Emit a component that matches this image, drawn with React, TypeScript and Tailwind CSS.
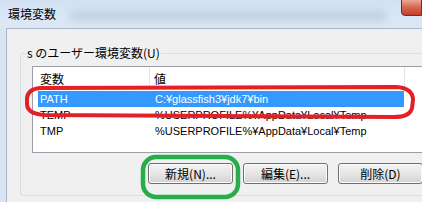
export default function App() {
  const rows = [
    { name: 'PATH', value: 'C:¥glassfish3¥jdk7¥bin', selected: true },
    { name: 'TEMP', value: '%USERPROFILE%¥AppData¥Local¥Temp', selected: false },
    { name: 'TMP', value: '%USERPROFILE%¥AppData¥Local¥Temp', selected: false },
  ];

  return (
    <div className="relative w-[422px] h-[202px] overflow-hidden bg-[#f0f0f0] text-black font-['Liberation_Sans','Noto_Sans_CJK_JP',sans-serif]">
      {/* title bar */}
      <div className="h-[28px] flex items-start bg-gradient-to-b from-[#d3e2f3] to-[#dde8f5]">
        <span className="ml-[8px] mt-[7px] text-[12px] leading-[14px] font-['Noto_Sans_CJK_JP',sans-serif]">環境変数</span>
        <div className="flex-1 h-[10px] mt-[11px] ml-[14px] mr-[14px] bg-[#aebfd2] opacity-60 blur-[4px] rounded-full" />
        <div className="shrink-0 w-[21px] h-[17px] -mt-px border border-[#4b3b3b] rounded-bl-[4px] bg-gradient-to-b from-[#e9a895] via-[#d6644d] to-[#c3402a]" />
      </div>

      <div className="flex h-[174px]">
        <div className="shrink-0 w-[6px] bg-[#d9e5f3]" />
        <div className="flex-1 min-w-0 border-l border-t border-[#a7b6c8] pl-[13px] pt-[24px]">
          {/* group box */}
          <div className="relative w-[420px] h-[143px] border border-[#d5dfe5] rounded-[3px]">
            <span className="absolute left-[5px] -top-[8px] px-[1px] bg-[#f0f0f0] text-[12px] leading-[14px] font-['Noto_Sans_CJK_JP',sans-serif]">
              s のユーザー環境変数(U)
            </span>

            {/* list view */}
            <div className="ml-[11px] mt-[12px] w-[400px] h-[87px] border border-[#9a9ea6] bg-white">
              <div className="flex h-[24px] items-center text-[12px] font-['Noto_Sans_CJK_JP',sans-serif]">
                <div className="w-[117px] h-full flex items-center pl-[7px] border-r border-[#e5e5e5]">変数</div>
                <div className="w-[255px] h-full flex items-center pl-[4px] border-r border-[#e5e5e5]">値</div>
              </div>
              {rows.map((r) => (
                <div
                  key={r.name}
                  className={`ml-[5px] w-[366px] h-[16px] flex items-center text-[11px] leading-[16px] ${
                    r.selected ? 'bg-[#3399ff] text-white' : ''
                  }`}
                >
                  <div className="w-[117px] pl-[2px]">{r.name}</div>
                  <div className="whitespace-nowrap">{r.value}</div>
                </div>
              ))}
            </div>

            {/* buttons */}
            <div className="flex gap-[10px] ml-[127px] mt-[10px]">
              {['新規(N)...', '編集(E)...', '削除(D)'].map((label) => (
                <button
                  key={label}
                  className="shrink-0 w-[85px] h-[21px] border border-[#707070] rounded-[3px] bg-gradient-to-b from-[#f3f3f3] via-[#e6e6e6] to-[#d2d2d2] shadow-[inset_0_0_0_1px_#fbfbfb] text-[12px] leading-[14px] font-['Noto_Sans_CJK_JP',sans-serif]"
                >
                  {label}
                </button>
              ))}
            </div>
          </div>
        </div>
      </div>

      {/* hand-drawn annotations */}
      <svg className="absolute inset-0 pointer-events-none" width="422" height="202" viewBox="0 0 422 202">
        <path
          d="M 40 88 L 396 87 Q 413 88 413 100 L 412 108 Q 410 117 394 117 L 45 115 Q 27 114 27 104 L 27 98 Q 28 89 40 88 Z"
          fill="none"
          stroke="#e41f26"
          strokeWidth="4"
        />
        <rect x="143" y="157" width="95" height="40" rx="13" fill="none" stroke="#27ad4a" strokeWidth="4.5" />
      </svg>
    </div>
  );
}
